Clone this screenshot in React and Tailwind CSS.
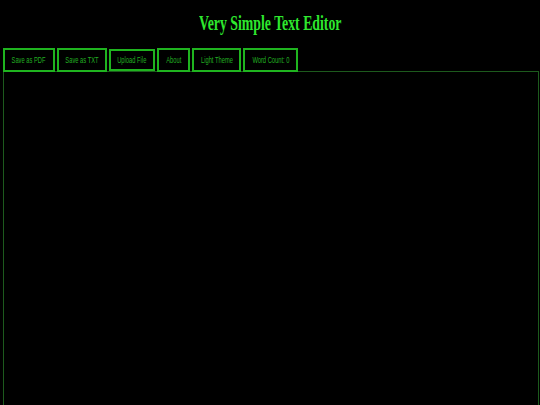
import React from "react";

const buttons = [
  { label: "Save as PDF", w: "w-[52px] h-[24px]" },
  { label: "Save as TXT", w: "w-[50px] h-[24px]" },
  { label: "Upload File", w: "w-[46px] h-[22px]" },
  { label: "About", w: "w-[33px] h-[24px]" },
  { label: "Light Theme", w: "w-[49px] h-[24px]" },
  { label: "Word Count: 0", w: "w-[55px] h-[24px]" },
];

export default function App() {
  return (
    <div className="w-[540px] h-[405px] bg-black overflow-hidden" style={{ fontFamily: '"Liberation Sans", Arial, sans-serif' }}>
      <div className="h-[48px] pt-[11px] flex justify-center">
        <h1
          className="h-[24px] leading-[24px] text-[20px] font-bold text-[#2ee82e] whitespace-nowrap scale-x-[0.69]"
          style={{ fontFamily: '"Liberation Serif", "Times New Roman", serif' }}
        >
          Very Simple Text Editor
        </h1>
      </div>
      <div className="flex items-center gap-[2px] pl-[3px] h-[24px]">
        {buttons.map((b) => (
          <button
            key={b.label}
            className={`${b.w} border-2 border-[#1fb41f] bg-black flex items-center justify-center p-0`}
          >
            <span className="text-[9px] leading-[10px] text-[#22b022] whitespace-nowrap scale-x-[0.64]">
              {b.label}
            </span>
          </button>
        ))}
      </div>
      <textarea
        className="block mt-[-1px] ml-[3px] w-[536px] h-[340px] bg-black border border-[#1d5a1d] outline-none resize-none text-[#1a9a1a]"
      />
    </div>
  );
}
